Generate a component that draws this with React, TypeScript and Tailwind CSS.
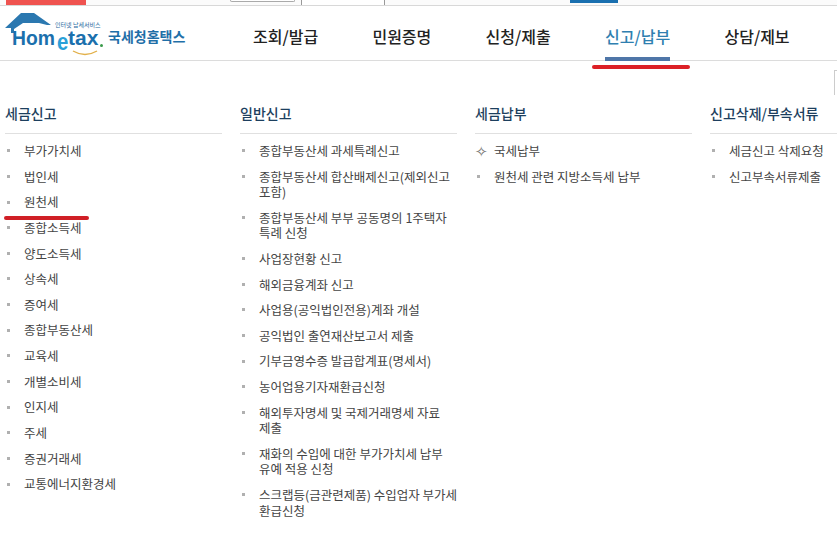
const FONT = "font-['Noto_Sans_CJK_KR','Noto_Sans',sans-serif]";
const LATIN = "font-['Liberation_Sans',sans-serif] font-bold";

const NAV = ["조회/발급", "민원증명", "신청/제출", "신고/납부", "상담/제보"];

const COLUMNS = [
  {
    title: "세금신고",
    items: [
      "부가가치세", "법인세", "원천세", "종합소득세", "양도소득세", "상속세", "증여세",
      "종합부동산세", "교육세", "개별소비세", "인지세", "주세", "증권거래세", "교통에너지환경세",
    ],
  },
  {
    title: "일반신고",
    items: [
      "종합부동산세 과세특례신고",
      "종합부동산세 합산배제신고(제외신고 포함)",
      "종합부동산세 부부 공동명의 1주택자 특례 신청",
      "사업장현황 신고",
      "해외금융계좌 신고",
      "사업용(공익법인전용)계좌 개설",
      "공익법인 출연재산보고서 제출",
      "기부금영수증 발급합계표(명세서)",
      "농어업용기자재환급신청",
      "해외투자명세 및 국제거래명세 자료 제출",
      "재화의 수입에 대한 부가가치세 납부 유예 적용 신청",
      "스크랩등(금관련제품) 수입업자 부가세 환급신청",
    ],
  },
  { title: "세금납부", items: ["국세납부", "원천세 관련 지방소득세 납부"] },
  { title: "신고삭제/부속서류", items: ["세금신고 삭제요청", "신고부속서류제출"] },
];

function Logo() {
  return (
    <div className="flex h-[46px] w-[180px] shrink-0 items-start">
      <div className="relative h-[46px] w-[103px] shrink-0">
        <svg viewBox="0 0 52 24" className="absolute left-0 top-0 h-[24px] w-[52px]">
          <path d="M0 19 L16 4 H29 L46 16 H42 L34 14 L18 14 L9 20 V24 H6 V19 Z" fill="#2b78b0" />
        </svg>
        <span className="absolute left-[50px] top-[12px] whitespace-nowrap text-[6px] leading-[7px] text-[#2b6aa0]">
          인터넷 납세서비스
        </span>
        <div className="absolute left-[7px] top-[21px] flex items-start">
          <span className={`${LATIN} w-[45px] origin-left scale-x-[0.92] text-[21px] leading-[16px] text-[#1b70ad]`}>Hom</span>
          <span className={`${LATIN} mt-[4px] w-[11px] origin-left scale-x-[0.85] text-[24px] leading-[16px] text-[#29a0d8]`}>e</span>
          <span className={`${LATIN} w-[32px] text-[21px] leading-[16px] text-[#1b70ad]`}>tax</span>
          <span className="mt-[14px] h-[3px] w-[3px] rounded-full bg-[#3a9a4a]" />
        </div>
        <svg viewBox="0 0 26 6" className="absolute left-[67px] top-[41px] h-[6px] w-[26px]">
          <path d="M1 1 Q13 8 25 1" fill="none" stroke="#e2b04a" strokeWidth="1.4" />
        </svg>
      </div>
      <span className="mt-[17px] whitespace-nowrap text-[14px] font-bold leading-[20px] text-[#1f6fa8]">
        국세청홈택스
      </span>
    </div>
  );
}

export default function App() {
  return (
    <div className={`${FONT} relative h-[539px] w-[837px] overflow-hidden bg-white`}>
      {/* cut off strip of the page above */}
      <div className="flex h-[6px] items-start border-b border-[#d8d8d8] bg-[#fbfbfb] pl-[6px]">
        <div className="h-[5px] w-[80px] bg-[#ef5350]" />
        <div className="ml-[144px] h-[2px] w-[65px] rounded-b-sm border-x border-b border-[#aaa] bg-white" />
        <div className="ml-[6px] h-[5px] w-[84px] border-x border-[#999] bg-white" />
        <div className="ml-[185px] h-[3px] w-[48px] bg-[#1a70b0]" />
      </div>

      <header className="flex h-[55px] items-start border-b border-[#dcdcdc] pl-[5px]">
        <div className="mt-[3px]">
          <Logo />
        </div>
        <nav className="ml-[68px] flex gap-[54.3px] pt-[18px]">
          {NAV.map((label, i) => (
            <div key={label} className="relative">
              <span className={`whitespace-nowrap text-[16px] font-medium leading-[22px] ${i === 3 ? "text-[#2f7fb0]" : "text-[#222]"}`}>
                {label}
              </span>
              {i === 3 && <div className="absolute left-0 top-[33px] h-[4px] w-full bg-[#4f76a8]" />}
            </div>
          ))}
        </nav>
      </header>

      <main className="flex gap-[18px] pl-[5px] pt-[39px]">
        {COLUMNS.map((col, c) => (
          <section key={col.title} className="w-[217px] shrink-0">
            <h2 className="h-[34px] whitespace-nowrap border-b border-[#e0e0e0] text-[14px] font-medium leading-[26px] text-[#1d3f5e]">
              {col.title}
            </h2>
            <ul className="flex flex-col gap-[10.15px] pt-[9px]">
              {col.items.map((item, i) => (
                <li key={item} className="flex text-[12.5px] leading-[15.5px] text-[#444]">
                  <span className="flex h-[15.5px] w-[19px] shrink-0 items-center pl-[2px]">
                    {c === 2 && i === 0 ? (
                      <span className="-ml-[2px] text-[15px] leading-none text-[#777]">✧</span>
                    ) : (
                      <span className="h-[3px] w-[3px] bg-[#b0b0b0]" />
                    )}
                  </span>
                  <span className={c === 1 ? "w-[202px] shrink-0 break-keep" : "whitespace-nowrap"}>{item}</span>
                </li>
              ))}
            </ul>
          </section>
        ))}
      </main>

      {/* hand-drawn red marks over the page */}
      <div className="absolute left-[592px] top-[65px] h-[4px] w-[98px] rounded-full bg-[#dc2026]" />
      <div className="absolute left-[4px] top-[216px] h-[4px] w-[85px] rounded-full bg-[#d01f26]" />
      <div className="absolute left-[834px] top-[70px] h-[25px] w-[3px] border-l border-t border-[#ccc]" />
    </div>
  );
}
